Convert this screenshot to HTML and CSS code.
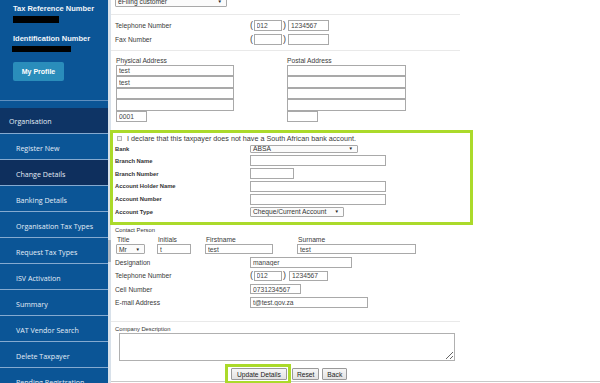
FILE: index.html
```html
<!DOCTYPE html>
<html>
<head>
<meta charset="utf-8">
<title>Change Details</title>
<link rel="stylesheet" href="styles.css">
</head>
<body>
<div class="page">
  <aside class="sidebar">
    <div class="ident">
      <div class="id-label">Tax Reference Number</div>
      <div class="redact r1"></div>
      <div class="id-label second">Identification Number</div>
      <div class="redact r2"></div>
      <button class="profile">My Profile</button>
    </div>
    <nav class="menu">
      <div class="menu-item head">Organisation</div>
      <div class="menu-item">Register New</div>
      <div class="menu-item active">Change Details</div>
      <div class="menu-item">Banking Details</div>
      <div class="menu-item">Organisation Tax Types</div>
      <div class="menu-item">Request Tax Types</div>
      <div class="menu-item">ISV Activation</div>
      <div class="menu-item">Summary</div>
      <div class="menu-item">VAT Vendor Search</div>
      <div class="menu-item">Delete Taxpayer</div>
      <div class="menu-item">Pending Registration</div>
    </nav>
  </aside>
  <div class="strip"><div class="thumb"></div></div>
  <main class="main">
    <div class="form">
      <div class="select top-select"><span>eFiling customer</span><span class="arrow">&#9660;</span></div>
      <div class="sep sep-top"></div>

      <div class="row r-phone">
        <span class="lbl">Telephone Number</span>
        <span class="phone"><span class="paren">(</span><input class="in code" value="012"><span class="paren close">)</span><input class="in num" value="1234567"></span>
      </div>
      <div class="row r-fax">
        <span class="lbl">Fax Number</span>
        <span class="phone"><span class="paren">(</span><input class="in code" value=""><span class="paren close">)</span><input class="in num" value=""></span>
      </div>
      <div class="sep sep-mid"></div>

      <div class="addresses">
        <div class="addr phys">
          <div class="lbl addr-lbl">Physical Address</div>
          <input class="in line" value="test">
          <input class="in line" value="test">
          <input class="in line" value="">
          <input class="in line" value="">
          <input class="in code-box" value="0001">
        </div>
        <div class="addr post">
          <div class="lbl addr-lbl">Postal Address</div>
          <input class="in line" value="">
          <input class="in line" value="">
          <input class="in line" value="">
          <input class="in line" value="">
          <input class="in code-box" value="">
        </div>
      </div>

      <div class="bank-box">
        <div class="declare"><span class="check"></span><span class="lbl declare-lbl">I declare that this taxpayer does not have a South African bank account.</span></div>
        <div class="brow b-first"><span class="blbl">Bank</span><div class="select bank-select"><span>ABSA</span><span class="arrow">&#9660;</span></div></div>
        <div class="brow"><span class="blbl">Branch Name</span><input class="in wide" value=""></div>
        <div class="brow"><span class="blbl">Branch Number</span><input class="in short" value=""></div>
        <div class="brow"><span class="blbl">Account Holder Name</span><input class="in wide" value=""></div>
        <div class="brow"><span class="blbl">Account Number</span><input class="in wide" value=""></div>
        <div class="brow"><span class="blbl">Account Type</span><div class="select type-select"><span>Cheque/Current Account</span><span class="arrow">&#9660;</span></div></div>
      </div>

      <div class="small-lbl contact-title">Contact Person</div>
      <div class="names">
        <div class="ncol c-title"><span class="lbl">Title</span><div class="select title-select"><span>Mr</span><span class="arrow">&#9660;</span></div></div>
        <div class="ncol c-init"><span class="lbl">Initials</span><input class="in init" value="t"></div>
        <div class="ncol c-first"><span class="lbl">Firstname</span><input class="in first" value="test"></div>
        <div class="ncol c-sur"><span class="lbl">Surname</span><input class="in sur" value="test"></div>
      </div>
      <div class="crows">
        <div class="crow"><span class="lbl">Designation</span><input class="in desig" value="manager"></div>
        <div class="crow"><span class="lbl">Telephone Number</span><span class="phone"><span class="paren">(</span><input class="in code" value="012"><span class="paren close">)</span><input class="in num2" value="1234567"></span></div>
        <div class="crow"><span class="lbl">Cell Number</span><input class="in cell" value="0731234567"></div>
        <div class="crow"><span class="lbl">E-mail Address</span><input class="in email" value="t@test.gov.za"></div>
      </div>
      <div class="sep sep-bottom"></div>

      <div class="small-lbl desc-lbl">Company Description</div>
      <textarea class="desc"></textarea>

      <div class="actions">
        <span class="highlight"><button class="btn">Update Details</button></span>
        <button class="btn">Reset</button>
        <button class="btn">Back</button>
      </div>
    </div>
  </main>
</div>
</body>
</html>
```

FILE: styles.css
```css
* { box-sizing: border-box; }
html, body { margin: 0; padding: 0; }
body {
  width: 600px;
  height: 383px;
  overflow: hidden;
  background: #fff;
  font-family: "Liberation Sans", Arial, sans-serif;
  color: #333;
}
.page { display: flex; height: 383px; }

/* Sidebar */
.sidebar { width: 108px; flex: none; background: #0b5596; color: #fff; overflow: hidden; }
.ident { height: 101px; padding: 4px 0 0 13px; border-bottom: 1px solid #5f8fbf; }
.id-label { font-weight: bold; font-size: 7.5px; line-height: 9px; color: #f2f6fa; white-space: nowrap; }
.id-label.second { margin-top: 11px; }
.redact { background: #000; }
.r1 { width: 46px; height: 7px; margin-top: 3px; }
.r2 { width: 59px; height: 6px; margin: 3px 0 0 -1px; }
.profile {
  display: block;
  margin-top: 10px;
  width: 51px;
  height: 19px;
  padding: 0;
  background: #2a8dbb;
  border: 0;
  border-radius: 2px;
  color: #fff;
  font: bold 7px "Liberation Sans", Arial, sans-serif;
}
.menu { margin-top: 7px; }
.menu-item {
  height: 26px;
  border-top: 1px solid #85aad0;
  padding: 2px 0 0 16px;
  display: flex;
  align-items: center;
  font: 7.1px "Open Sans", sans-serif;
  color: #e4edf6;
  white-space: nowrap;
}
.menu-item.head { border-top: 0; height: 25px; padding: 1px 0 0 9px; background: #0e3465; }
.menu-item.active { background: #0e2f5d; }

/* scroll strip */
.strip { width: 3px; flex: none; background: #d8e1ea; }
.thumb { margin-top: 240px; height: 22px; background: #a9b4c0; }

/* Main */
.main { flex: 1; height: 382px; border-bottom: 1px solid #c8c8c8; }
.form { width: 349px; padding-left: 4px; font-size: 6.7px; }
.lbl { font-size: 6.7px; color: #3a3a3a; white-space: nowrap; }
.declare-lbl { font-size: 7.2px; }
.small-lbl { font-size: 5.8px; color: #333; line-height: 8px; white-space: nowrap; }

.in {
  display: block;
  height: 11px;
  padding: 0 2px;
  margin: 0;
  border: 1px solid #a9a9a9;
  border-radius: 0;
  background: #fff;
  font: 6.7px "Liberation Sans", Arial, sans-serif;
  color: #444;
  outline: none;
}
.select {
  display: flex;
  align-items: center;
  justify-content: space-between;
  height: 11px;
  padding: 0 4px 0 2px;
  border: 1px solid #a9a9a9;
  border-radius: 1px;
  background: #fbfbfb;
  font-size: 6.7px;
  color: #333;
  white-space: nowrap;
}
.arrow { font-size: 4.5px; color: #222; }

.top-select { width: 112px; margin-top: -4px; }
.sep { height: 1px; background: #e9e9e9; margin-left: -4px; }
.sep-top { margin-top: 7px; }
.sep-mid { margin-top: 5px; }
.sep-bottom { margin-top: 12px; }

.row { display: grid; grid-template-columns: 135px auto; align-items: center; height: 11px; }
.r-phone { margin-top: 5px; }
.r-fax { margin-top: 3px; }
.phone { display: flex; align-items: center; }
.paren { font-size: 9px; line-height: 11px; color: #444; margin-right: 0.5px; }
.paren.close { margin: 0 2px 0 1.5px; }
.code { width: 28px; }
.num { width: 41px; }
.num2 { width: 39px; margin-left: 1px; }

.addresses { display: flex; margin-top: 6px; }
.addr { display: flex; flex-direction: column; }
.phys { width: 172px; padding-left: 1px; }
.addr-lbl { line-height: 8px; }
.line { height: 11.4px; }
.phys .line { width: 118px; }
.post .line { width: 119px; }
.code-box { width: 31px; height: 11.4px; }

/* bank box */
.bank-box {
  width: 363px;
  margin: 8px 0 0 -5px;
  border: 3px solid #abda2a;
  padding: 0 0 3.75px 2px;
}
.declare { height: 10.5px; display: flex; align-items: center; padding-top: 1px; }
.check {
  width: 5px; height: 5px;
  margin: 0 5px 0 2px;
  border: 1px solid #b5b5b5;
  background: #f1f1f1;
}
.brow { display: grid; grid-template-columns: 135px auto; align-items: center; height: 12.75px; }
.brow.b-first { height: 11px; }
.blbl { font-size: 5.8px; font-weight: bold; color: #333; white-space: nowrap; }
.bank-select { width: 108px; height: 8px; }
.type-select { width: 94px; height: 9.5px; }
.wide { width: 136px; }
.short { width: 44px; }

/* contact */
.contact-title { margin-top: 1px; }
.names { display: flex; margin-top: 2px; }
.ncol { display: flex; flex-direction: column; }
.ncol .lbl { line-height: 8px; padding-left: 1px; }
.c-title { width: 42px; }
.c-title .lbl { padding-left: 2px; }
.c-init { width: 48px; }
.c-first { width: 92px; }
.title-select { width: 29px; height: 10.5px; margin-left: 1px; }
.names .in { height: 10.5px; }
.init { width: 34px; }
.first { width: 68px; }
.sur { width: 119px; }

.crows { margin-top: 1.5px; }
.crow { display: grid; grid-template-columns: 135px auto; align-items: center; height: 13.3px; }
.crow .in { height: 10.5px; }
.desig { width: 102px; }
.cell { width: 51px; }
.email { width: 118px; }

.desc-lbl { margin-top: 4px; line-height: 7px; }
.desc {
  display: block;
  width: 336px;
  height: 28px;
  margin: 0 0 0 4px;
  border: 1px solid #b0b0b0;
  padding: 2px;
  font: 6.7px "Liberation Sans", Arial, sans-serif;
}

.actions { display: flex; align-items: flex-start; margin-top: 3px; padding-left: 110px; }
.highlight { border: 3px solid #abda2a; padding: 1px 1px 1px 3px; margin-right: 1px; }
.btn {
  display: block;
  height: 12px;
  margin: 4px 3px 0 0;
  padding: 0 4px;
  border: 1px solid #9a9a9a;
  border-radius: 1px;
  background: linear-gradient(#f6f6f6, #e2e2e2);
  font: 6.7px "Liberation Sans", Arial, sans-serif;
  color: #222;
}
.highlight .btn { margin: 0; padding: 0 5px; }
```
